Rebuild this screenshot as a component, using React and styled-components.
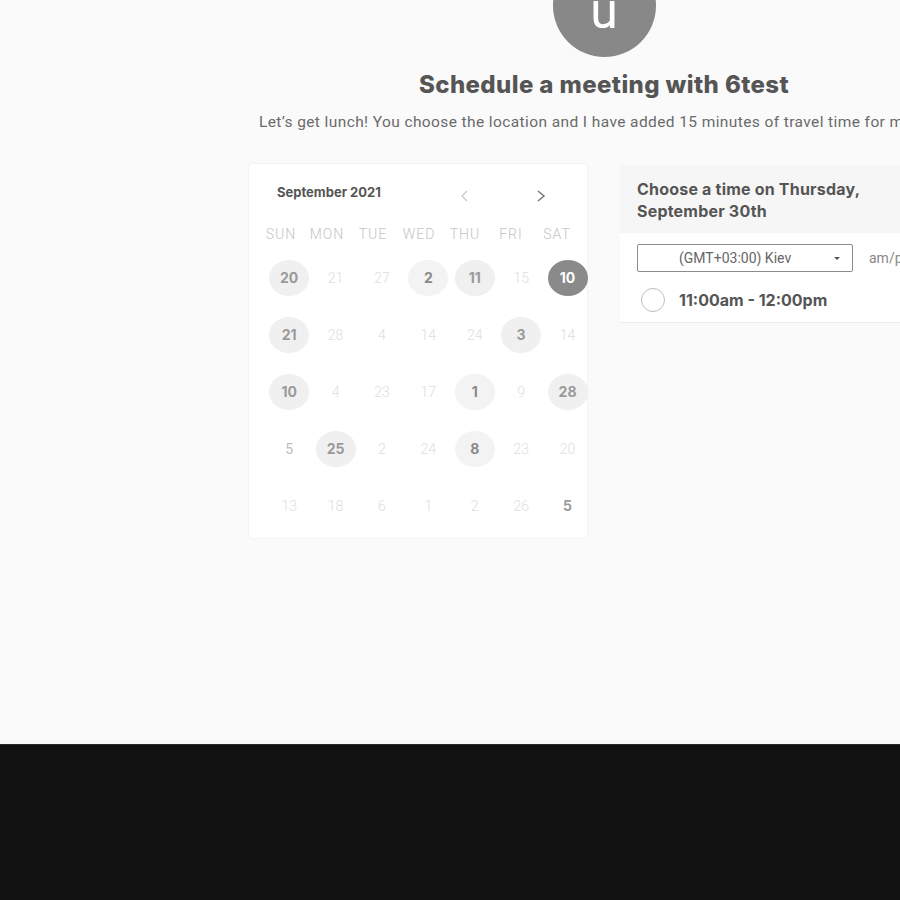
import styled, { createGlobalStyle } from "styled-components";

const GlobalStyle = createGlobalStyle`
  html, body {
    margin: 0;
    padding: 0;
    background: #fafafa;
    overflow: hidden;
  }
  body {
    font-family: Roboto, "Liberation Sans", sans-serif;
  }
`;

const weekdays = ["SUN", "MON", "TUE", "WED", "THU", "FRI", "SAT"];

// kind: off = faded, open = light circle, busy = textured circle, sel = selected, plain = bold no circle
const weeks = [
  [["20", "open"], ["21", "off"], ["27", "off"], ["2", "busy"], ["11", "open"], ["15", "off"], ["10", "sel"]],
  [["21", "open"], ["28", "off"], ["4", "off"], ["14", "off"], ["24", "off"], ["3", "open"], ["14", "off"]],
  [["10", "open"], ["4", "off"], ["23", "off"], ["17", "off"], ["1", "busy"], ["9", "off"], ["28", "open"]],
  [["5", "dim"], ["25", "open"], ["2", "off"], ["24", "off"], ["8", "busy"], ["23", "off"], ["20", "off"]],
  [["13", "off"], ["18", "off"], ["6", "off"], ["1", "off"], ["2", "off"], ["26", "off"], ["5", "plain"]],
];

export default function App() {
  return (
    <>
      <GlobalStyle />
      <Page>
        <Content>
          <Avatar>u</Avatar>
          <Title>Schedule a meeting with 6test</Title>
          <Description>
            Let’s get lunch! You choose the location and I have added 15 minutes of travel time for me to get there.
          </Description>
          <Columns>
            <Calendar>
              <CalHeader>
                <Month>September 2021</Month>
                <Arrow $dim>
                  <svg width="10" height="14" viewBox="0 0 10 14">
                    <polyline points="7,2 2,7 7,12" fill="none" stroke="currentColor" strokeWidth="1.2" />
                  </svg>
                </Arrow>
                <Arrow>
                  <svg width="10" height="14" viewBox="0 0 10 14">
                    <polyline points="2,2 8,7 2,12" fill="none" stroke="currentColor" strokeWidth="1.5" />
                  </svg>
                </Arrow>
              </CalHeader>
              <Weekdays>
                {weekdays.map((d) => (
                  <Weekday key={d}>{d}</Weekday>
                ))}
              </Weekdays>
              <Days>
                {weeks.flat().map(([n, kind], i) => (
                  <DayCell key={i}>
                    <Day $kind={kind}>{n}</Day>
                  </DayCell>
                ))}
              </Days>
            </Calendar>
            <TimePanel>
              <PanelHeader>
                Choose a time on Thursday,
                <br />
                September 30th
              </PanelHeader>
              <ZoneRow>
                <ZoneSelect>
                  <span>(GMT+03:00) Kiev</span>
                  <Caret />
                </ZoneSelect>
                <Format>am/pm</Format>
              </ZoneRow>
              <SlotRow>
                <Radio />
                <SlotText>11:00am - 12:00pm</SlotText>
              </SlotRow>
            </TimePanel>
          </Columns>
        </Content>
      </Page>
      <Footer />
    </>
  );
}

const Page = styled.main`
  height: 744px;
  width: 900px;
  overflow: hidden;
  background: #fafafa;
`;

const Content = styled.div`
  margin-left: 248px;
  width: 712px;
  display: flex;
  flex-direction: column;
  align-items: center;
`;

const Avatar = styled.div`
  margin-top: -46px;
  width: 103px;
  height: 103px;
  box-sizing: border-box;
  padding-top: 32px;
  border-radius: 50%;
  background: #888888;
  color: #ffffff;
  font-family: Roboto, "Liberation Sans", sans-serif;
  font-size: 50px;
  line-height: 1;
  display: flex;
  justify-content: center;
  align-items: flex-start;
`;

const Title = styled.h1`
  margin: 14px 0 0;
  font-family: Inter, "Liberation Sans", sans-serif;
  font-weight: 800;
  font-size: 24px;
  letter-spacing: 0.4px;
  line-height: 28px;
  color: #555555;
  white-space: nowrap;
`;

const Description = styled.p`
  align-self: stretch;
  margin: 13px 0 0;
  padding-left: 11px;
  font-size: 15.5px;
  letter-spacing: 0.4px;
  line-height: 20px;
  color: #6a6a6a;
  white-space: nowrap;
`;

const Columns = styled.div`
  align-self: stretch;
  margin-top: 31px;
  display: flex;
  gap: 32px;
  align-items: flex-start;
`;

const Calendar = styled.section`
  width: 340px;
  box-sizing: border-box;
  padding: 16px 0 4px;
  background: #ffffff;
  border: 1px solid #f3f3f3;
  border-radius: 4px;
`;

const CalHeader = styled.div`
  display: flex;
  align-items: center;
  height: 24px;
  padding: 0 34px 0 28px;
`;

const Month = styled.div`
  flex: 1;
  font-family: Inter, "Liberation Sans", sans-serif;
  font-weight: 700;
  font-size: 13px;
  color: #555555;
`;

const Arrow = styled.span`
  width: 24px;
  display: flex;
  justify-content: center;
  padding-top: 8px;
  color: ${(p) => (p.$dim ? "#c8c8c8" : "#777777")};
  & + & {
    margin-left: 52px;
  }
`;

const Weekdays = styled.div`
  margin-top: 20px;
  padding-left: 9px;
  display: grid;
  grid-template-columns: repeat(7, 46px);
`;

const Weekday = styled.div`
  text-align: center;
  font-size: 14px;
  font-weight: 300;
  line-height: 20px;
  letter-spacing: 1px;
  color: #c4c4c4;
`;

const Days = styled.div`
  margin-top: 5px;
  padding-left: 17px;
  display: grid;
  grid-template-columns: repeat(7, 46.4px);
  grid-auto-rows: 57px;
`;

const DayCell = styled.div`
  display: flex;
  justify-content: center;
  align-items: center;
`;

const dayBg = {
  open: "#f0f0f0",
  busy: "#f3f3f3",
  sel: "#8a8a8a",
};

const dayColor = {
  off: "#dedede",
  dim: "#bdbdbd",
  open: "#9a9a9a",
  busy: "#8a8a8a",
  sel: "#ffffff",
  plain: "#9a9a9a",
};

const Day = styled.div`
  width: 40px;
  height: 36px;
  border-radius: 50%;
  display: flex;
  justify-content: center;
  align-items: center;
  font-family: ${(p) =>
    p.$kind === "off" || p.$kind === "dim"
      ? 'Roboto, "Liberation Sans", sans-serif'
      : 'Inter, "Liberation Sans", sans-serif'};
  font-size: 14px;
  font-weight: ${(p) => (p.$kind === "off" ? 300 : p.$kind === "dim" ? 400 : 700)};
  background: ${(p) => dayBg[p.$kind] || "transparent"};
  color: ${(p) => dayColor[p.$kind]};
`;

const TimePanel = styled.section`
  margin-top: 2px;
  width: 340px;
  background: #ffffff;
  border-bottom: 1px solid #ececec;
`;

const PanelHeader = styled.div`
  background: #f6f6f6;
  padding: 13px 17px 11px;
  font-family: Inter, "Liberation Sans", sans-serif;
  font-weight: 700;
  font-size: 16px;
  letter-spacing: 0.2px;
  line-height: 22px;
  color: #555555;
`;

const ZoneRow = styled.div`
  margin-top: 11px;
  padding-left: 17px;
  display: flex;
  align-items: center;
  gap: 16px;
`;

const ZoneSelect = styled.div`
  width: 216px;
  height: 28px;
  box-sizing: border-box;
  border: 1px solid #8c8c8c;
  border-radius: 2px;
  display: flex;
  align-items: center;
  padding: 0 12px 0 41px;
  font-size: 14px;
  color: #666666;
  span {
    flex: 1;
  }
`;

const Caret = styled.span`
  flex: none !important;
  width: 0;
  height: 0;
  border-left: 3px solid transparent;
  border-right: 3px solid transparent;
  border-top: 3px solid #555555;
`;

const Format = styled.span`
  font-size: 14px;
  color: #888888;
  white-space: nowrap;
`;

const SlotRow = styled.div`
  display: flex;
  align-items: center;
  gap: 14px;
  padding: 16px 0 10px 21px;
`;

const Radio = styled.span`
  width: 24px;
  height: 24px;
  box-sizing: border-box;
  border-radius: 50%;
  border: 1.5px solid #bdbdbd;
`;

const SlotText = styled.span`
  font-family: Inter, "Liberation Sans", sans-serif;
  font-weight: 700;
  font-size: 16px;
  color: #555555;
`;

const Footer = styled.footer`
  height: 156px;
  background: #121212;
  border-top: 1px solid #2a2a2a;
  box-sizing: border-box;
`;
